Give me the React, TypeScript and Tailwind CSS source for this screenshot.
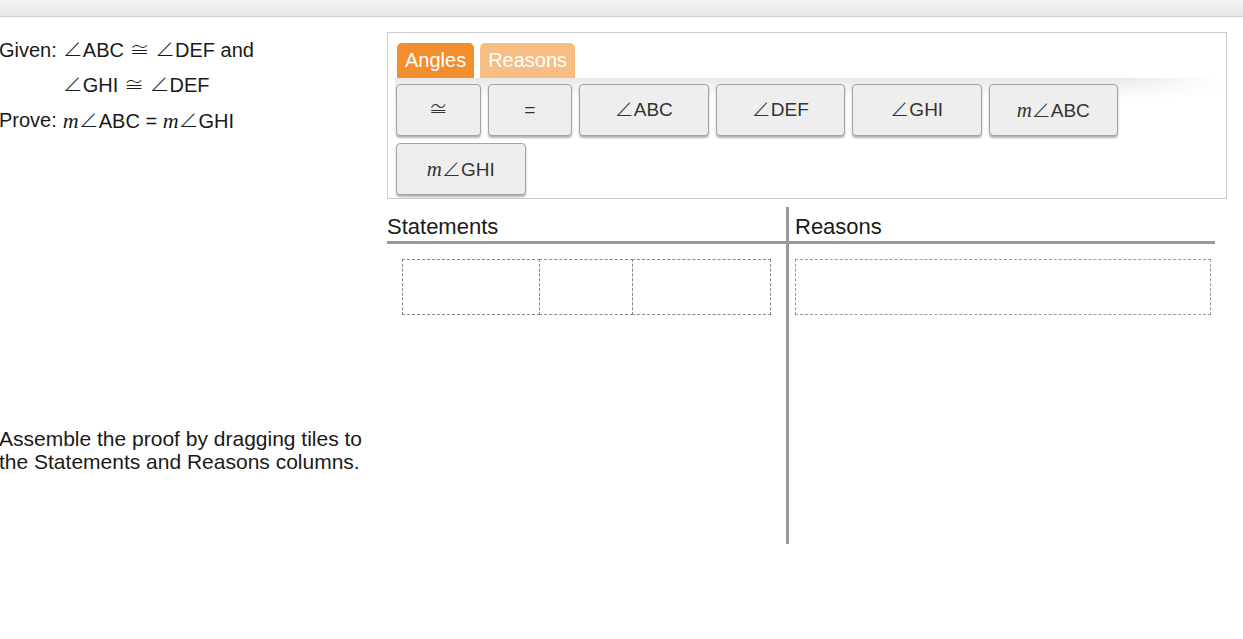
import React from "react";

// Tile palette + two-column proof table

type Tile = { key: string; wide: boolean; m?: boolean; text: string; sym?: string };

const TILES: Tile[] = [
  { key: "cong", wide: false, text: "", sym: "≅" },
  { key: "eq", wide: false, text: "=" },
  { key: "abc", wide: true, text: "ABC", sym: "∠" },
  { key: "def", wide: true, text: "DEF", sym: "∠" },
  { key: "ghi", wide: true, text: "GHI", sym: "∠" },
  { key: "mabc", wide: true, m: true, text: "ABC", sym: "∠" },
  { key: "mghi", wide: true, m: true, text: "GHI", sym: "∠" },
];

function M() {
  return <span className="font-['Liberation_Serif',serif] text-[1.1em] italic">m</span>;
}

function Sym({ c }: { c: string }) {
  return <span className="font-['Noto_Sans_CJK_JP',sans-serif] font-light leading-none">{c}</span>;
}

function TileButton({ tile }: { tile: Tile }) {
  return (
    <div
      className={
        (tile.wide ? "w-[129.5px]" : "w-[84.5px]") +
        " h-[52px] flex items-center justify-center rounded-[4px] border border-[#a3a3a3] bg-[#eeeeee] text-[19px] text-[#333] shadow-[0_2px_2px_rgba(0,0,0,0.3)]"
      }
    >
      <span className="leading-[24px]">
        {tile.m && <M />}
        {tile.sym && <Sym c={tile.sym} />}
        {tile.text}
      </span>
    </div>
  );
}

export default function App() {
  return (
    <div className="min-h-screen bg-white font-['Liberation_Sans',Arial,sans-serif] text-[#1a1a1a]">
      <div className="h-[17px] border-b border-[#cfcfcf] bg-gradient-to-b from-[#f3f3f3] to-[#e6e6e6]" />

      <div className="flex">
        {/* left: problem text */}
        <div className="w-[387px] shrink-0 pt-[16px]">
          <div className="-ml-px">
            <div className="grid grid-cols-[auto_1fr] gap-x-[6px] text-[20px] leading-[35px]">
              <span>Given:</span>
              <span>
                <Sym c="∠" />ABC <Sym c="≅" /> <Sym c="∠" />DEF and
              </span>
              <span />
              <span>
                <Sym c="∠" />GHI <Sym c="≅" /> <Sym c="∠" />DEF
              </span>
              <span>Prove:</span>
              <span>
                <M />
                <Sym c="∠" />ABC = <M />
                <Sym c="∠" />GHI
              </span>
            </div>
            <p className="mt-[288px] w-[368px] text-[21px] leading-[23px]">
              Assemble the proof by dragging tiles to the Statements and Reasons columns.
            </p>
          </div>
        </div>

        {/* right: palette and table */}
        <div className="mt-[15px] flex flex-col">
          <div className="w-[840px] border border-[#cccccc] pt-[10px] pb-[3px]">
            <div className="ml-[9px] flex gap-[6px] text-[20px] leading-[35px] text-white">
              <div className="rounded-t-[5px] bg-[#f28e2e] px-2">Angles</div>
              <div className="rounded-t-[5px] bg-[#f8bd83] px-2">Reasons</div>
            </div>
            <div className="ml-[7px] mr-[5px] bg-[linear-gradient(to_right,rgba(255,255,255,0)_88%,#fff),linear-gradient(to_bottom,#e8e8e8,rgba(255,255,255,0)_20px)] pl-px pt-[6px]">
              <div className="flex flex-wrap gap-x-[7px] gap-y-[7px]">
                {TILES.map((t) => (
                  <TileButton key={t.key} tile={t} />
                ))}
              </div>
            </div>
          </div>

          <div className="mt-[8px] flex h-[337px] w-[828px]">
            <div className="w-[399px] shrink-0">
              <div className="flex h-[37px] items-end border-b-[3px] border-[#999999] pb-[2px] text-[22px] leading-[25px]">
                Statements
              </div>
              <div className="ml-[15px] mt-[15px] flex h-[56px]">
                <div className="w-[138px] border border-dashed border-[#8a8a8a]" />
                <div className="-ml-px w-[94px] border border-dashed border-[#8a8a8a]" />
                <div className="-ml-px w-[139px] border border-dashed border-[#8a8a8a]" />
              </div>
            </div>
            <div className="flex-1 border-l-[3px] border-[#999999]">
              <div className="flex h-[37px] items-end border-b-[3px] border-[#999999] pb-[2px] pl-[6px] text-[22px] leading-[25px]">
                Reasons
              </div>
              <div className="ml-[6px] mt-[15px] h-[56px] w-[416px] border border-dashed border-[#9a9a9a]" />
            </div>
          </div>
        </div>
      </div>
    </div>
  );
}
